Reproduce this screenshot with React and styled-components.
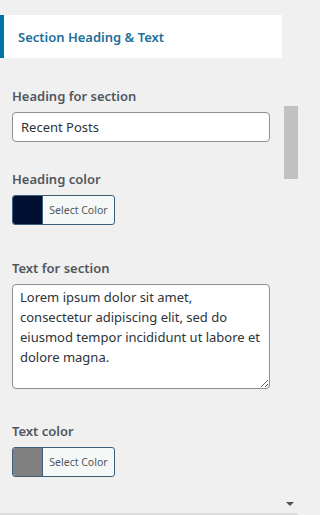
import React from 'react'
import styled, { createGlobalStyle } from 'styled-components'

const Global = createGlobalStyle`
  html, body {
    margin: 0;
    padding: 0;
    background: #f0f0f1;
  }
  body {
    font-family: "Noto Sans", "Open Sans", sans-serif;
    -webkit-font-smoothing: antialiased;
  }
  * { box-sizing: border-box; }
`

const Page = styled.div`
  display: flex;
  width: 298px;
  height: 515px;
  overflow: hidden;
  border-bottom: 2px solid #dcdcde;
`

const Panel = styled.div`
  flex: 1;
  padding-top: 15px;
`

const Header = styled.div`
  height: 43px;
  background: #fff;
  border-left: 4px solid #0073aa;
  display: flex;
  align-items: center;
  padding-left: 14px;
  font-size: 13px;
  font-weight: 600;
  color: #1d6f9b;
`

const Control = styled.div`
  padding: 0 12px;
  margin-top: ${p => p.gap}px;
`

const Label = styled.div`
  font-size: 13px;
  line-height: 20px;
  font-weight: 600;
  color: #50575e;
  margin-bottom: 6px;
`

const TextInput = styled.input`
  display: block;
  width: 258px;
  height: 30px;
  border: 1px solid #8c8f94;
  border-radius: 4px;
  background: #fff;
  padding: 0 8px;
  font: inherit;
  font-size: 13px;
  color: #2c3338;
  outline: none;
`

const TextArea = styled.textarea`
  display: block;
  width: 258px;
  height: 105px;
  border: 1px solid #8c8f94;
  border-radius: 4px;
  background: #fff;
  padding: 2px 7px;
  font: inherit;
  font-size: 13px;
  line-height: 20px;
  color: #2c3338;
  resize: vertical;
  outline: none;
`

const ColorButton = styled.button`
  display: flex;
  align-items: stretch;
  width: 103px;
  height: 30px;
  padding: 0;
  border: 1px solid #3d5f7e;
  border-radius: 3px;
  background: #f6f7f7;
  overflow: hidden;
  cursor: pointer;
  font: inherit;
`

const Swatch = styled.span`
  width: 30px;
  background: ${p => p.color};
  border-right: 1px solid #3d5f7e;
`

const ButtonText = styled.span`
  flex: 1;
  display: flex;
  align-items: center;
  justify-content: center;
  font-size: 10.5px;
  color: #50575e;
`

const ScrollTrack = styled.div`
  width: 16px;
  display: flex;
  flex-direction: column;
  align-items: flex-end;
`

const Thumb = styled.div`
  margin-top: 106px;
  width: 14px;
  height: 73px;
  background: #c1c1c1;
`

const Arrow = styled.div`
  margin-top: auto;
  margin-bottom: 7px;
  margin-right: 4px;
  width: 0;
  height: 0;
  border-left: 4px solid transparent;
  border-right: 4px solid transparent;
  border-top: 4px solid #505050;
`

export default function App() {
  return (
    <>
      <Global />
      <Page>
        <Panel>
          <Header>Section Heading &amp; Text</Header>

          <Control gap={28}>
            <Label>Heading for section</Label>
            <TextInput defaultValue="Recent Posts" />
          </Control>

          <Control gap={27}>
            <Label>Heading color</Label>
            <ColorButton>
              <Swatch color="#001033" />
              <ButtonText>Select Color</ButtonText>
            </ColorButton>
          </Control>

          <Control gap={33}>
            <Label>Text for section</Label>
            <TextArea
              defaultValue="Lorem ipsum dolor sit amet, consectetur adipiscing elit, sed do eiusmod tempor incididunt ut labore et dolore magna."
            />
          </Control>

          <Control gap={32}>
            <Label>Text color</Label>
            <ColorButton>
              <Swatch color="#808080" />
              <ButtonText>Select Color</ButtonText>
            </ColorButton>
          </Control>
        </Panel>
        <ScrollTrack>
          <Thumb />
          <Arrow />
        </ScrollTrack>
      </Page>
    </>
  )
}
